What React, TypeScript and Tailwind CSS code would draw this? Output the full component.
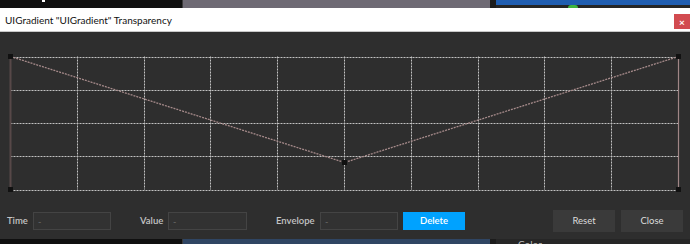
import React from "react";

const W = 690;
const OY = 32; // svg top in page coords

function Graph() {
  const x0 = 10.5, x1 = 678.5, y0 = 56.5, y1 = 189.5;
  const cols = 10, rows = 4;
  const vx = Array.from({ length: cols + 1 }, (_, i) => x0 + ((x1 - x0) * i) / cols);
  const hy = Array.from({ length: rows + 1 }, (_, i) => Math.round(y0 + ((y1 - y0) * i) / rows));
  const grid = "#c2c2c2";
  const mid = { x: 344.5, y: 162.5 };
  const sq = (x: number, y: number, k: string) => (
    <rect key={k} x={x - 2.5} y={y - 2.5} width={5} height={5} fill="#111" />
  );
  return (
    <svg width={W} height={176} viewBox={`0 ${OY} ${W} 176`} className="block shrink-0">
      {hy.map((y, i) => (
        <line key={"h" + i} x1={x0} x2={x1} y1={y + 0.5} y2={y + 0.5} stroke={grid} strokeWidth={1} strokeDasharray="2 1" />
      ))}
      {vx.slice(1, -1).map((x, i) => (
        <line key={"v" + i} x1={Math.floor(x) + 0.5} x2={Math.floor(x) + 0.5} y1={y0} y2={y1} stroke={grid} strokeWidth={1} strokeDasharray="2 1" />
      ))}
      <line x1={10.5} x2={10.5} y1={56} y2={189} stroke="#574848" strokeWidth={2} />
      <line x1={678.5} x2={678.5} y1={56} y2={189} stroke="#a08686" strokeWidth={1.2} />
      <polyline
        points={`${x0},${y0} ${mid.x},${mid.y} ${x1},${y0}`}
        fill="none"
        stroke="#a58a8a"
        strokeWidth={1.3}
        strokeDasharray="2 1"
      />
      {sq(x0, y0, "a")}
      {sq(x1, y0, "b")}
      {sq(x0, y1, "c")}
      {sq(x1, y1, "d")}
      {sq(mid.x, mid.y, "m")}
    </svg>
  );
}

function Field({ w }: { w: string }) {
  return (
    <div className={`${w} h-[18px] border border-[#444444] bg-[#323232] flex items-center pl-[4px] text-[9px] text-[#6a6a6a] leading-none font-normal`}>
      -
    </div>
  );
}

export default function App() {
  const font = { fontFamily: 'Lato, "Noto Sans", "Liberation Sans", sans-serif' };
  return (
    <div className="w-[690px] h-[244px] flex flex-col overflow-hidden bg-[#111111]" style={font}>
      {/* background editor, top */}
      <div className="h-[8px] flex shrink-0">
        <div className="w-[182px] bg-[#101010] relative">
          <div className="absolute left-[42px] top-0 w-[3px] h-[2px] bg-white" />
        </div>
        <div className="w-[1px] bg-[#3a3a3a]" />
        <div className="w-[307px] bg-[#6e6a74]" />
        <div className="w-[6px] bg-[#1c1c1c]" />
        <div className="flex-1 flex flex-col bg-[#252525] relative">
          <div className="h-[5px] bg-[#1f5db0]" />
          <div className="absolute left-[72px] top-[5px] w-[10px] h-[3px] bg-[#3fb53f] rounded-t-sm" />
        </div>
      </div>
      {/* title bar */}
      <div className="h-[24px] bg-white border-b border-[#c8c8c8] flex items-start shrink-0">
        <div className="pl-[5px] pt-[6px] text-[10px] leading-[12px] text-[#111]">UIGradient "UIGradient" Transparency</div>
        <div className="ml-auto mt-[6px] w-[16px] h-[15px] bg-[#d24b50] flex items-center justify-center text-white text-[10px] leading-none font-bold">
          ×
        </div>
      </div>
      {/* body */}
      <div className="flex-1 bg-[#2e2e2e] flex flex-col">
        <Graph />
        <div className="h-[26px] flex items-center pl-[7px] pr-[7px] text-[9.5px] font-semibold text-[#c4c4c4]">
          <div className="w-[26px]">Time</div>
          <Field w="w-[78px]" />
          <div className="w-[29px]" />
          <div className="w-[28px]">Value</div>
          <Field w="w-[79px]" />
          <div className="w-[29px]" />
          <div className="w-[44px]">Envelope</div>
          <Field w="w-[78px]" />
          <div className="ml-[5px] w-[62px] h-[18px] bg-[#00a2ff] text-white flex items-center justify-center">Delete</div>
          <div className="flex-1" />
          <div className="w-[62px] h-[22px] bg-[#3a3a3a] text-[#dcdcdc] font-normal flex items-center justify-center">Reset</div>
          <div className="ml-[6px] w-[62px] h-[22px] bg-[#3a3a3a] text-[#dcdcdc] font-normal flex items-center justify-center">Close</div>
        </div>
      </div>
      {/* background editor, bottom */}
      <div className="h-[5px] flex shrink-0">
        <div className="w-[182px] bg-[#101010]" />
        <div className="w-[1px] bg-[#3a3a3a]" />
        <div className="w-[307px] bg-[#2f4563]" />
        <div className="w-[6px] bg-[#1c1c1c]" />
        <div className="flex-1 bg-[#262626] relative overflow-hidden">
          <div className="absolute left-[22px] top-[0px] text-[10px] leading-[10px] text-[#bbb]">Color</div>
        </div>
      </div>
    </div>
  );
}
